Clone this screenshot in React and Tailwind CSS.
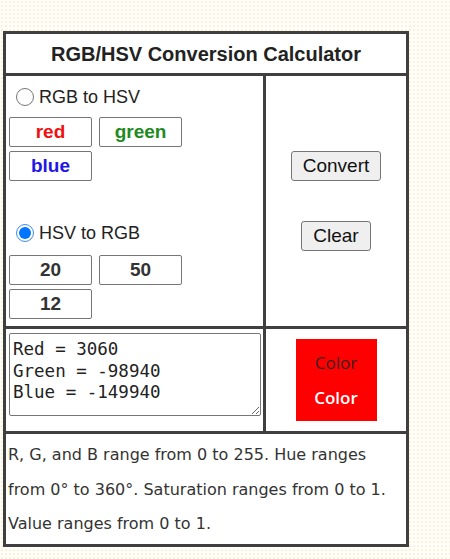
import React from "react";

const arial = { fontFamily: '"Liberation Sans", Arial, sans-serif' };

function Radio({ checked }) {
  if (checked) {
    return (
      <span className="flex h-[18px] w-[18px] items-center justify-center rounded-full border-[1.5px] border-[#3d8cf0] bg-white">
        <span className="h-[12px] w-[12px] rounded-full bg-[#0075ff]" />
      </span>
    );
  }
  return <span className="h-[18px] w-[18px] rounded-full border border-[#767676] bg-white" />;
}

function Field({ value, color }) {
  return (
    <div
      className={`flex h-[30px] w-[83px] items-center justify-center rounded-[2px] border border-[#767676] bg-white text-[19px] font-bold ${color}`}
      style={arial}
    >
      {value}
    </div>
  );
}

function Btn({ children }) {
  return (
    <button
      className="h-[30px] rounded-[3px] border border-[#767676] bg-[#efefef] px-[11px] text-[19px] text-[#111]"
      style={arial}
    >
      {children}
    </button>
  );
}

export default function App() {
  return (
    <div className="min-h-[559px] w-[450px] bg-[#fffefa] bg-[radial-gradient(circle,#f8ecc4_0.6px,transparent_0.9px)] bg-[size:4px_4px] pl-[3px] pt-[31px]">
      <div className="w-[406px] border-[3px] border-[#3f3f3f] bg-white text-[#222]">
        {/* Title */}
        <div
          className="flex h-[42px] items-center justify-center border-b-[3px] border-[#3f3f3f] text-[20px] font-bold text-[#222]"
          style={arial}
        >
          RGB/HSV Conversion Calculator
        </div>

        {/* Row 2 */}
        <div className="flex h-[253px] border-b-[3px] border-[#3f3f3f]">
          <div className="w-[260px] border-r-[3px] border-[#3f3f3f] pl-[3px]">
            <div className="ml-[7px] mt-[11px] flex h-[20px] items-center gap-[5px] text-[18px] text-[#222]" style={arial}>
              <Radio />
              <span>RGB to HSV</span>
            </div>
            <div className="mt-[10px] flex flex-col gap-[4px]">
              <div className="flex gap-[7px]">
                <Field value="red" color="text-[#f01010]" />
                <Field value="green" color="text-[#1f8a1f]" />
              </div>
              <Field value="blue" color="text-[#2216e6]" />
            </div>
            <div className="ml-[7px] mt-[42px] flex h-[20px] items-center gap-[5px] text-[18px] text-[#222]" style={arial}>
              <Radio checked />
              <span>HSV to RGB</span>
            </div>
            <div className="mt-[12px] flex flex-col gap-[4px]">
              <div className="flex gap-[7px]">
                <Field value="20" color="text-[#333]" />
                <Field value="50" color="text-[#333]" />
              </div>
              <Field value="12" color="text-[#333]" />
            </div>
          </div>
          <div className="flex flex-1 flex-col items-center gap-[40px] pt-[75px]">
            <Btn>Convert</Btn>
            <Btn>Clear</Btn>
          </div>
        </div>

        {/* Row 3 */}
        <div className="flex h-[105px] border-b-[3px] border-[#3f3f3f]">
          <div className="w-[260px] border-r-[3px] border-[#3f3f3f] pl-[3px] pt-[4px]">
            <textarea
              readOnly
              defaultValue={"Red = 3060\nGreen = -98940\nBlue = -149940"}
              className="block h-[83px] w-[252px] rounded-[2px] border border-[#767676] px-[3px] pt-[5px] text-[17.5px] leading-[21.5px] text-[#222] outline-none"
              style={{ fontFamily: '"DejaVu Sans Mono", "Liberation Mono", monospace' }}
            />
          </div>
          <div className="flex flex-1 items-center justify-center">
            <div
              className="flex h-[82px] w-[81px] flex-col items-center justify-center bg-[#ff0000] text-[17px]"
              style={{ fontFamily: '"Open Sans", "Liberation Sans", sans-serif' }}
            >
              <span className="leading-[35px] text-[#3a2020]">Color</span>
              <span className="font-semibold leading-[35px] text-white">Color</span>
            </div>
          </div>
        </div>

        {/* Row 4 */}
        <div
          className="h-[110px] pl-[2px] pr-[4px] pt-[4px] text-[16px] leading-[34.5px] text-[#333]"
          style={{ fontFamily: '"DejaVu Sans", Verdana, sans-serif' }}
        >
          R, G, and B range from 0 to 255. Hue ranges from 0° to 360°. Saturation ranges from 0 to 1. Value ranges from 0 to 1.
        </div>
      </div>
    </div>
  );
}
